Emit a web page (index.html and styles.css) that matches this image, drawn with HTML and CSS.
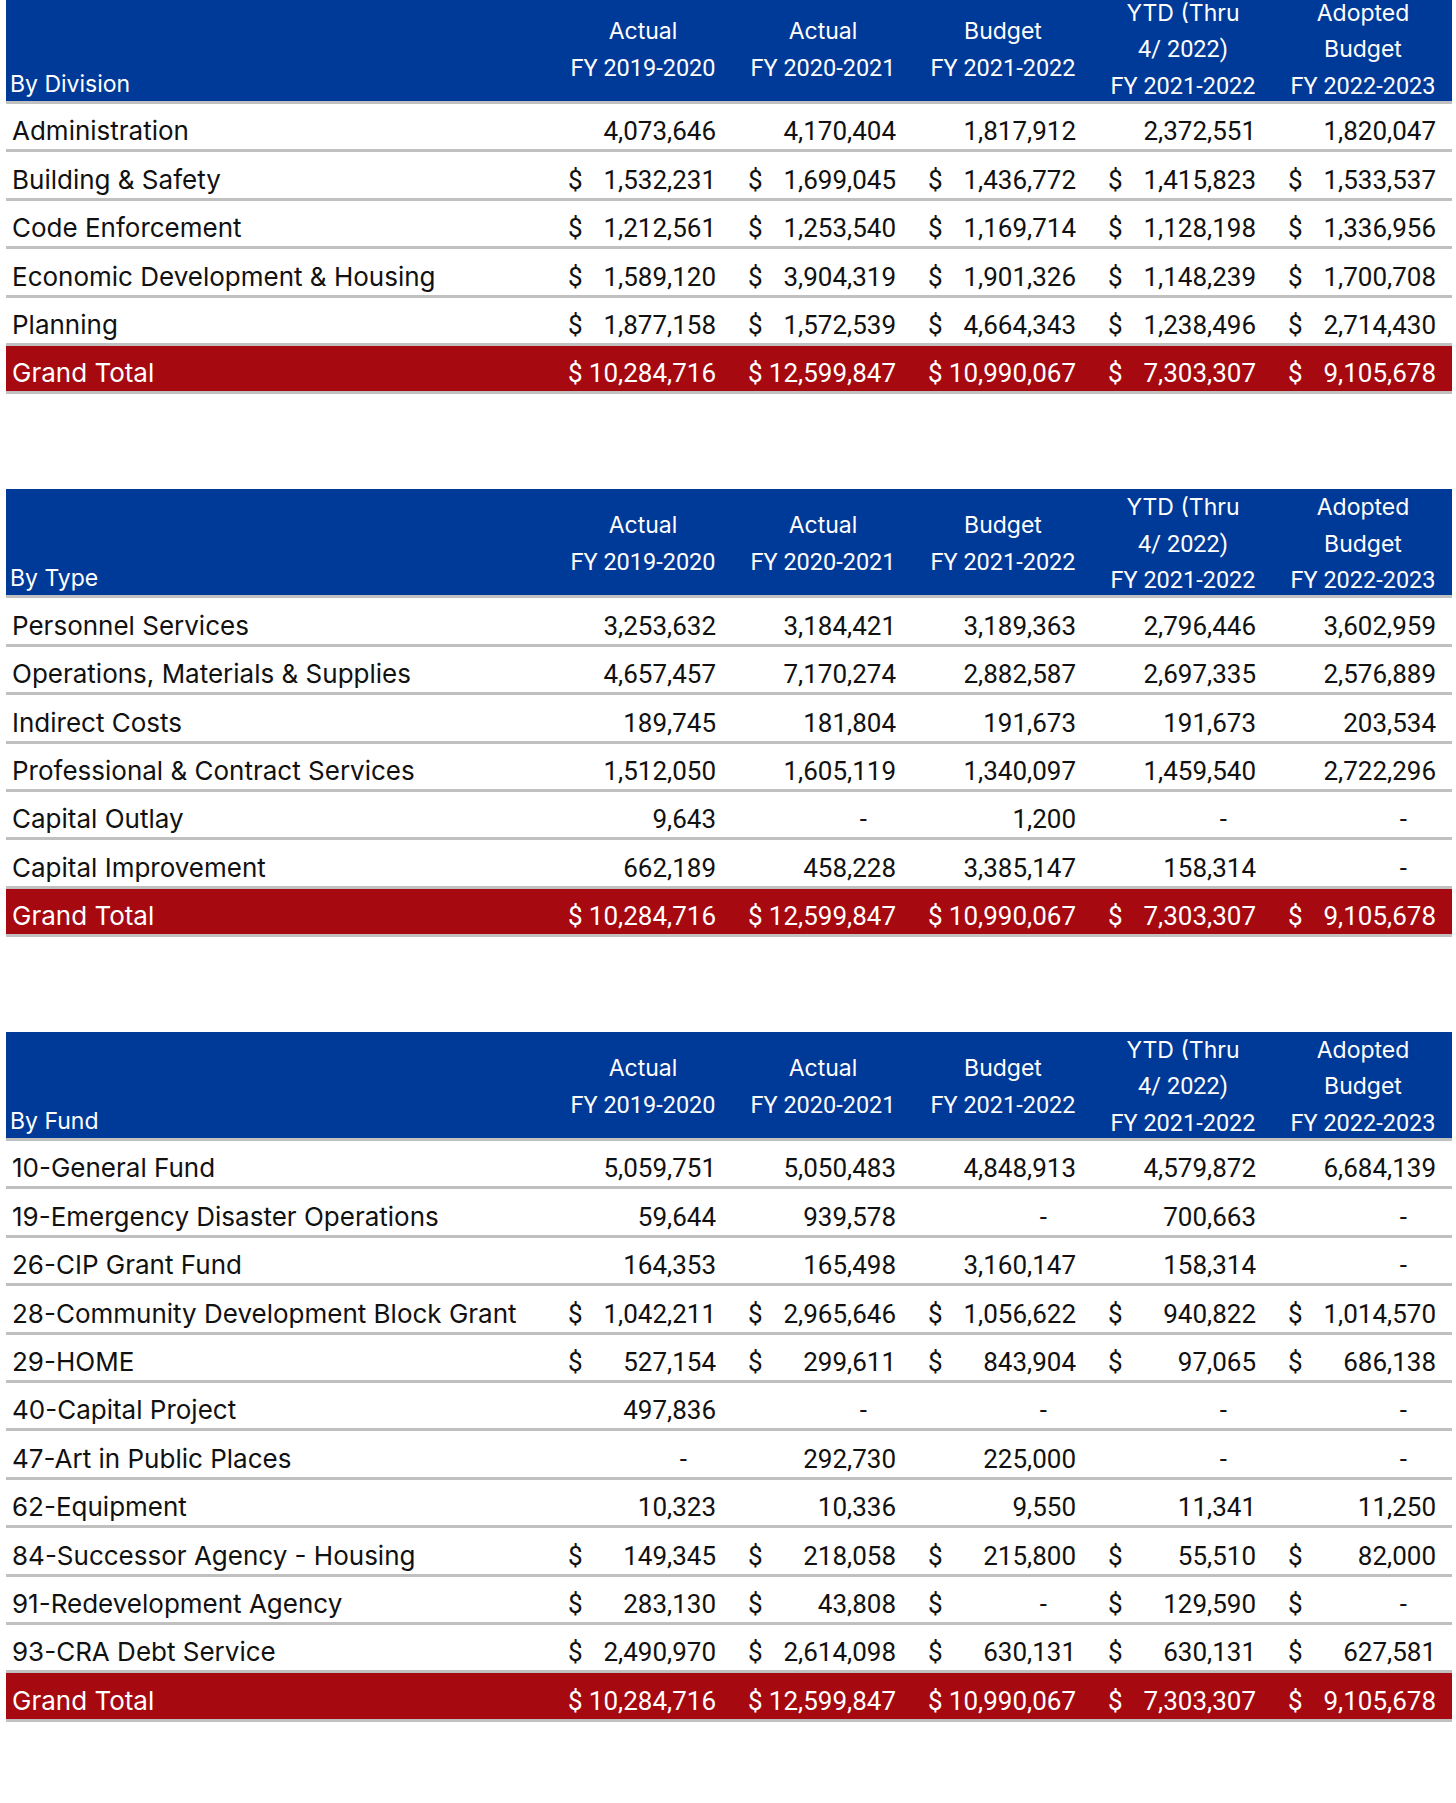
FILE: index.html
```html
<!DOCTYPE html>
<html lang="en">
<head>
<meta charset="utf-8">
<title>Budget Summary</title>
<link rel="stylesheet" href="styles.css">
</head>
<body>
<main class="page">

<table class="budget first">
  <colgroup><col class="c-label"><col class="c-num"><col class="c-num"><col class="c-num"><col class="c-num"><col class="c-num"></colgroup>
  <thead>
    <tr>
      <th class="label">By Division</th>
      <th><div class="hd"><div>Actual</div><div class="fy">FY 2019-2020</div></div></th>
      <th><div class="hd"><div>Actual</div><div class="fy">FY 2020-2021</div></div></th>
      <th><div class="hd"><div>Budget</div><div class="fy">FY 2021-2022</div></div></th>
      <th><div class="hd"><div>YTD (Thru</div><div class="fy">4/<span class="sp"></span>2022)</div><div class="fy">FY 2021-2022</div></div></th>
      <th><div class="hd"><div>Adopted</div><div>Budget</div><div class="fy">FY 2022-2023</div></div></th>
    </tr>
  </thead>
  <tbody>
    <tr><td class="label">Administration</td><td><div class="amt"><span></span><span>4,073,646</span></div></td><td><div class="amt"><span></span><span>4,170,404</span></div></td><td><div class="amt"><span></span><span>1,817,912</span></div></td><td><div class="amt"><span></span><span>2,372,551</span></div></td><td><div class="amt"><span></span><span>1,820,047</span></div></td></tr>
    <tr><td class="label">Building &amp; Safety</td><td><div class="amt"><span>$</span><span>1,532,231</span></div></td><td><div class="amt"><span>$</span><span>1,699,045</span></div></td><td><div class="amt"><span>$</span><span>1,436,772</span></div></td><td><div class="amt"><span>$</span><span>1,415,823</span></div></td><td><div class="amt"><span>$</span><span>1,533,537</span></div></td></tr>
    <tr><td class="label">Code Enforcement</td><td><div class="amt"><span>$</span><span>1,212,561</span></div></td><td><div class="amt"><span>$</span><span>1,253,540</span></div></td><td><div class="amt"><span>$</span><span>1,169,714</span></div></td><td><div class="amt"><span>$</span><span>1,128,198</span></div></td><td><div class="amt"><span>$</span><span>1,336,956</span></div></td></tr>
    <tr><td class="label">Economic Development &amp; Housing</td><td><div class="amt"><span>$</span><span>1,589,120</span></div></td><td><div class="amt"><span>$</span><span>3,904,319</span></div></td><td><div class="amt"><span>$</span><span>1,901,326</span></div></td><td><div class="amt"><span>$</span><span>1,148,239</span></div></td><td><div class="amt"><span>$</span><span>1,700,708</span></div></td></tr>
    <tr><td class="label">Planning</td><td><div class="amt"><span>$</span><span>1,877,158</span></div></td><td><div class="amt"><span>$</span><span>1,572,539</span></div></td><td><div class="amt"><span>$</span><span>4,664,343</span></div></td><td><div class="amt"><span>$</span><span>1,238,496</span></div></td><td><div class="amt"><span>$</span><span>2,714,430</span></div></td></tr>
    <tr class="total"><td class="label">Grand Total</td><td><div class="amt"><span>$</span><span>10,284,716</span></div></td><td><div class="amt"><span>$</span><span>12,599,847</span></div></td><td><div class="amt"><span>$</span><span>10,990,067</span></div></td><td><div class="amt"><span>$</span><span>7,303,307</span></div></td><td><div class="amt"><span>$</span><span>9,105,678</span></div></td></tr>
  </tbody>
</table>

<table class="budget">
  <colgroup><col class="c-label"><col class="c-num"><col class="c-num"><col class="c-num"><col class="c-num"><col class="c-num"></colgroup>
  <thead>
    <tr>
      <th class="label">By Type</th>
      <th><div class="hd"><div>Actual</div><div class="fy">FY 2019-2020</div></div></th>
      <th><div class="hd"><div>Actual</div><div class="fy">FY 2020-2021</div></div></th>
      <th><div class="hd"><div>Budget</div><div class="fy">FY 2021-2022</div></div></th>
      <th><div class="hd"><div>YTD (Thru</div><div class="fy">4/<span class="sp"></span>2022)</div><div class="fy">FY 2021-2022</div></div></th>
      <th><div class="hd"><div>Adopted</div><div>Budget</div><div class="fy">FY 2022-2023</div></div></th>
    </tr>
  </thead>
  <tbody>
    <tr><td class="label">Personnel Services</td><td><div class="amt"><span></span><span>3,253,632</span></div></td><td><div class="amt"><span></span><span>3,184,421</span></div></td><td><div class="amt"><span></span><span>3,189,363</span></div></td><td><div class="amt"><span></span><span>2,796,446</span></div></td><td><div class="amt"><span></span><span>3,602,959</span></div></td></tr>
    <tr><td class="label">Operations, Materials &amp; Supplies</td><td><div class="amt"><span></span><span>4,657,457</span></div></td><td><div class="amt"><span></span><span>7,170,274</span></div></td><td><div class="amt"><span></span><span>2,882,587</span></div></td><td><div class="amt"><span></span><span>2,697,335</span></div></td><td><div class="amt"><span></span><span>2,576,889</span></div></td></tr>
    <tr><td class="label">Indirect Costs</td><td><div class="amt"><span></span><span>189,745</span></div></td><td><div class="amt"><span></span><span>181,804</span></div></td><td><div class="amt"><span></span><span>191,673</span></div></td><td><div class="amt"><span></span><span>191,673</span></div></td><td><div class="amt"><span></span><span>203,534</span></div></td></tr>
    <tr><td class="label">Professional &amp; Contract Services</td><td><div class="amt"><span></span><span>1,512,050</span></div></td><td><div class="amt"><span></span><span>1,605,119</span></div></td><td><div class="amt"><span></span><span>1,340,097</span></div></td><td><div class="amt"><span></span><span>1,459,540</span></div></td><td><div class="amt"><span></span><span>2,722,296</span></div></td></tr>
    <tr><td class="label">Capital Outlay</td><td><div class="amt"><span></span><span>9,643</span></div></td><td><div class="amt"><span></span><span class="dash">-</span></div></td><td><div class="amt"><span></span><span>1,200</span></div></td><td><div class="amt"><span></span><span class="dash">-</span></div></td><td><div class="amt"><span></span><span class="dash">-</span></div></td></tr>
    <tr><td class="label">Capital Improvement</td><td><div class="amt"><span></span><span>662,189</span></div></td><td><div class="amt"><span></span><span>458,228</span></div></td><td><div class="amt"><span></span><span>3,385,147</span></div></td><td><div class="amt"><span></span><span>158,314</span></div></td><td><div class="amt"><span></span><span class="dash">-</span></div></td></tr>
    <tr class="total"><td class="label">Grand Total</td><td><div class="amt"><span>$</span><span>10,284,716</span></div></td><td><div class="amt"><span>$</span><span>12,599,847</span></div></td><td><div class="amt"><span>$</span><span>10,990,067</span></div></td><td><div class="amt"><span>$</span><span>7,303,307</span></div></td><td><div class="amt"><span>$</span><span>9,105,678</span></div></td></tr>
  </tbody>
</table>

<table class="budget">
  <colgroup><col class="c-label"><col class="c-num"><col class="c-num"><col class="c-num"><col class="c-num"><col class="c-num"></colgroup>
  <thead>
    <tr>
      <th class="label">By Fund</th>
      <th><div class="hd"><div>Actual</div><div class="fy">FY 2019-2020</div></div></th>
      <th><div class="hd"><div>Actual</div><div class="fy">FY 2020-2021</div></div></th>
      <th><div class="hd"><div>Budget</div><div class="fy">FY 2021-2022</div></div></th>
      <th><div class="hd"><div>YTD (Thru</div><div class="fy">4/<span class="sp"></span>2022)</div><div class="fy">FY 2021-2022</div></div></th>
      <th><div class="hd"><div>Adopted</div><div>Budget</div><div class="fy">FY 2022-2023</div></div></th>
    </tr>
  </thead>
  <tbody>
    <tr><td class="label">10-General Fund</td><td><div class="amt"><span></span><span>5,059,751</span></div></td><td><div class="amt"><span></span><span>5,050,483</span></div></td><td><div class="amt"><span></span><span>4,848,913</span></div></td><td><div class="amt"><span></span><span>4,579,872</span></div></td><td><div class="amt"><span></span><span>6,684,139</span></div></td></tr>
    <tr><td class="label">19-Emergency Disaster Operations</td><td><div class="amt"><span></span><span>59,644</span></div></td><td><div class="amt"><span></span><span>939,578</span></div></td><td><div class="amt"><span></span><span class="dash">-</span></div></td><td><div class="amt"><span></span><span>700,663</span></div></td><td><div class="amt"><span></span><span class="dash">-</span></div></td></tr>
    <tr><td class="label">26-CIP Grant Fund</td><td><div class="amt"><span></span><span>164,353</span></div></td><td><div class="amt"><span></span><span>165,498</span></div></td><td><div class="amt"><span></span><span>3,160,147</span></div></td><td><div class="amt"><span></span><span>158,314</span></div></td><td><div class="amt"><span></span><span class="dash">-</span></div></td></tr>
    <tr><td class="label">28-Community Development Block Grant</td><td><div class="amt"><span>$</span><span>1,042,211</span></div></td><td><div class="amt"><span>$</span><span>2,965,646</span></div></td><td><div class="amt"><span>$</span><span>1,056,622</span></div></td><td><div class="amt"><span>$</span><span>940,822</span></div></td><td><div class="amt"><span>$</span><span>1,014,570</span></div></td></tr>
    <tr><td class="label">29-HOME</td><td><div class="amt"><span>$</span><span>527,154</span></div></td><td><div class="amt"><span>$</span><span>299,611</span></div></td><td><div class="amt"><span>$</span><span>843,904</span></div></td><td><div class="amt"><span>$</span><span>97,065</span></div></td><td><div class="amt"><span>$</span><span>686,138</span></div></td></tr>
    <tr><td class="label">40-Capital Project</td><td><div class="amt"><span></span><span>497,836</span></div></td><td><div class="amt"><span></span><span class="dash">-</span></div></td><td><div class="amt"><span></span><span class="dash">-</span></div></td><td><div class="amt"><span></span><span class="dash">-</span></div></td><td><div class="amt"><span></span><span class="dash">-</span></div></td></tr>
    <tr><td class="label">47-Art in Public Places</td><td><div class="amt"><span></span><span class="dash">-</span></div></td><td><div class="amt"><span></span><span>292,730</span></div></td><td><div class="amt"><span></span><span>225,000</span></div></td><td><div class="amt"><span></span><span class="dash">-</span></div></td><td><div class="amt"><span></span><span class="dash">-</span></div></td></tr>
    <tr><td class="label">62-Equipment</td><td><div class="amt"><span></span><span>10,323</span></div></td><td><div class="amt"><span></span><span>10,336</span></div></td><td><div class="amt"><span></span><span>9,550</span></div></td><td><div class="amt"><span></span><span>11,341</span></div></td><td><div class="amt"><span></span><span>11,250</span></div></td></tr>
    <tr><td class="label">84-Successor Agency - Housing</td><td><div class="amt"><span>$</span><span>149,345</span></div></td><td><div class="amt"><span>$</span><span>218,058</span></div></td><td><div class="amt"><span>$</span><span>215,800</span></div></td><td><div class="amt"><span>$</span><span>55,510</span></div></td><td><div class="amt"><span>$</span><span>82,000</span></div></td></tr>
    <tr><td class="label">91-Redevelopment Agency</td><td><div class="amt"><span>$</span><span>283,130</span></div></td><td><div class="amt"><span>$</span><span>43,808</span></div></td><td><div class="amt"><span>$</span><span class="dash">-</span></div></td><td><div class="amt"><span>$</span><span>129,590</span></div></td><td><div class="amt"><span>$</span><span class="dash">-</span></div></td></tr>
    <tr><td class="label">93-CRA Debt Service</td><td><div class="amt"><span>$</span><span>2,490,970</span></div></td><td><div class="amt"><span>$</span><span>2,614,098</span></div></td><td><div class="amt"><span>$</span><span>630,131</span></div></td><td><div class="amt"><span>$</span><span>630,131</span></div></td><td><div class="amt"><span>$</span><span>627,581</span></div></td></tr>
    <tr class="total"><td class="label">Grand Total</td><td><div class="amt"><span>$</span><span>10,284,716</span></div></td><td><div class="amt"><span>$</span><span>12,599,847</span></div></td><td><div class="amt"><span>$</span><span>10,990,067</span></div></td><td><div class="amt"><span>$</span><span>7,303,307</span></div></td><td><div class="amt"><span>$</span><span>9,105,678</span></div></td></tr>
  </tbody>
</table>

</main>
</body>
</html>
```

FILE: styles.css
```css
html, body {
  margin: 0;
  padding: 0;
  background: #ffffff;
}

body {
  font-family: Inter, "Liberation Sans", Arial, sans-serif;
  color: #111111;
}

.page {
  padding: 0 4px 0 6px;
}

.budget {
  width: 1446px;
  border-collapse: collapse;
  table-layout: fixed;
  margin: 0 0 95px 0;
}

.budget.first {
  margin-top: -5px;
}

.c-label { width: 546px; }
.c-num { width: 180px; }

.budget th {
  background: #003a98;
  color: #ffffff;
  font-weight: 400;
  height: 106px;
  padding: 0;
  text-align: center;
  white-space: nowrap;
  border-bottom: 3px solid #c0c0c0;
}

.budget th.label {
  text-align: left;
  vertical-align: bottom;
  font-size: 23px;
  line-height: 33px;
  padding: 0 0 0 4px;
}

.hd {
  box-sizing: border-box;
  height: 106px;
  padding: 3px 0 0 2px;
  display: flex;
  flex-direction: column;
  justify-content: center;
  font-size: 23px;
  line-height: 36.5px;
}

.fy {
  font-family: Roboto, "Liberation Sans", Arial, sans-serif;
  font-size: 23.5px;
}

.sp {
  display: inline-block;
  width: 6px;
}

.budget td {
  height: 42.4px;
  padding: 0 16px 3px 16px;
  font-size: 26px;
  line-height: 30px;
  vertical-align: bottom;
  white-space: nowrap;
  border-bottom: 3px solid #c0c0c0;
}

.budget td.label {
  padding-left: 6px;
}

.amt {
  display: flex;
  justify-content: space-between;
  font-family: Roboto, "Liberation Sans", Arial, sans-serif;
}

.dash {
  margin-right: 29px;
}

.total td {
  background: #a6090f;
  color: #ffffff;
}
```
